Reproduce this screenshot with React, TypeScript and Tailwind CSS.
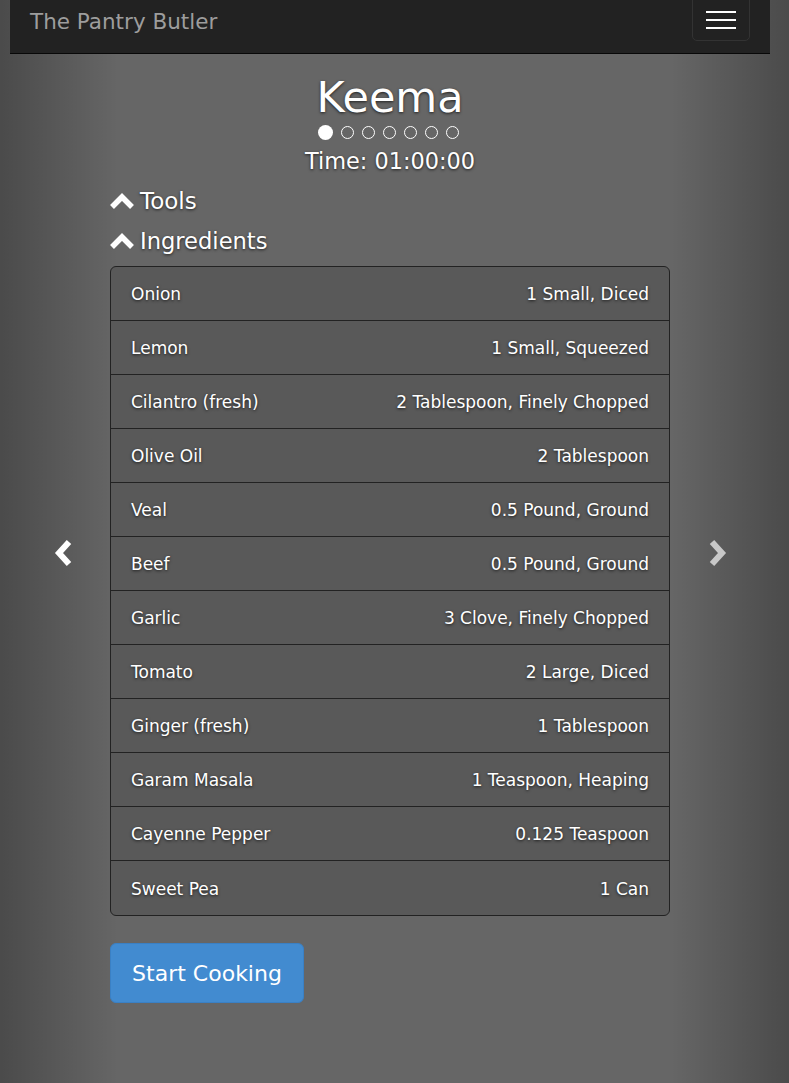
import React from 'react';

interface Ingredient {
    name: string;
    amount: string;
}

const INGREDIENTS: Ingredient[] = [
    { name: 'Onion', amount: '1 Small, Diced' },
    { name: 'Lemon', amount: '1 Small, Squeezed' },
    { name: 'Cilantro (fresh)', amount: '2 Tablespoon, Finely Chopped' },
    { name: 'Olive Oil', amount: '2 Tablespoon' },
    { name: 'Veal', amount: '0.5 Pound, Ground' },
    { name: 'Beef', amount: '0.5 Pound, Ground' },
    { name: 'Garlic', amount: '3 Clove, Finely Chopped' },
    { name: 'Tomato', amount: '2 Large, Diced' },
    { name: 'Ginger (fresh)', amount: '1 Tablespoon' },
    { name: 'Garam Masala', amount: '1 Teaspoon, Heaping' },
    { name: 'Cayenne Pepper', amount: '0.125 Teaspoon' },
    { name: 'Sweet Pea', amount: '1 Can' },
];

const STEPS = 7;

const ChevronUp: React.FC = () => (
    <svg width="24" height="16" viewBox="0 0 24 16" className="shrink-0">
        <polyline points="2,14 12,4 22,14" fill="none" stroke="white" strokeWidth="5.5" strokeLinejoin="miter" />
    </svg>
);

const SideChevron: React.FC<{ dir: 'left' | 'right'; color: string }> = ({ dir, color }) => (
    <svg width="22" height="28" viewBox="0 0 22 28">
        <polyline
            points={dir === 'left' ? '16,3 6,14 16,25' : '6,3 16,14 6,25'}
            fill="none"
            stroke={color}
            strokeWidth="6"
            strokeLinejoin="miter"
        />
    </svg>
);

const App: React.FC = () => {
    return (
        <div className="relative min-h-[1083px] overflow-hidden bg-[#666] text-white [font-family:'DejaVu_Sans',sans-serif]">
            {/* carousel controls */}
            <div className="absolute inset-y-0 left-0 w-[118px] bg-gradient-to-r from-[rgba(0,0,0,0.27)] to-transparent">
                <div className="absolute left-[53px] top-[539px]">
                    <SideChevron dir="left" color="#ffffff" />
                </div>
            </div>
            <div className="absolute inset-y-0 right-0 w-[118px] bg-gradient-to-l from-[rgba(0,0,0,0.27)] to-transparent">
                <div className="absolute right-[61px] top-[539px]">
                    <SideChevron dir="right" color="#c8c8c8" />
                </div>
            </div>

            <div className="relative w-[780px]">
                {/* navbar */}
                <nav className="mx-[10px] flex h-[54px] items-start justify-between border-b border-[#080808] bg-[#222]">
                    <span className="pl-[20px] pt-[9px] text-[21.5px] leading-[26px] text-[#9d9d9d]">The Pantry Butler</span>
                    <button className="mr-[20px] mt-[-8px] flex h-[49px] w-[58px] flex-col items-center justify-center gap-[6px] rounded-[5px] border border-[#333] pt-[6px]">
                        <span className="block h-[2px] w-[30px] bg-white" />
                        <span className="block h-[2px] w-[30px] bg-white" />
                        <span className="block h-[2px] w-[30px] bg-white" />
                    </button>
                </nav>

                {/* recipe */}
                <div className="mx-auto w-[560px] [text-shadow:0_1px_3px_rgba(0,0,0,0.7)]">
                    <h1 className="mt-[20px] h-[46px] text-center text-[43px] leading-[46px]">Keema</h1>
                    <div className="mt-[5px] flex h-[15px] items-center justify-center gap-[8px] pr-[4px]">
                        {Array.from({ length: STEPS }).map((_, i) =>
                            i === 0 ? (
                                <span key={i} className="block h-[15px] w-[15px] rounded-full bg-white" />
                            ) : (
                                <span key={i} className="block h-[13px] w-[13px] rounded-full border border-white" />
                            )
                        )}
                    </div>
                    <p className="mt-[8px] text-center text-[22.4px] leading-[26px]">Time: 01:00:00</p>

                    <div className="mt-[14px] flex h-[26px] items-center gap-[6px]">
                        <ChevronUp />
                        <span className="text-[23px] leading-[26px]">Tools</span>
                    </div>
                    <div className="mt-[14px] flex h-[26px] items-center gap-[6px]">
                        <ChevronUp />
                        <span className="text-[22.6px] leading-[26px]">Ingredients</span>
                    </div>

                    <ul className="mt-[12px] divide-y divide-[#222] overflow-hidden rounded-[6px] border border-[#222] bg-[#595959]">
                        {INGREDIENTS.map(item => (
                            <li key={item.name} className="flex h-[54px] items-center justify-between px-[20px] pt-[3px] text-[17px]">
                                <span>{item.name}</span>
                                <span>{item.amount}</span>
                            </li>
                        ))}
                    </ul>

                    <button className="mt-[27px] h-[60px] w-[194px] rounded-[6px] border border-[#3a80c4] bg-[#428bd0] text-[22px] text-white [text-shadow:none]">
                        Start Cooking
                    </button>
                </div>
            </div>
        </div>
    );
};

export default App;
